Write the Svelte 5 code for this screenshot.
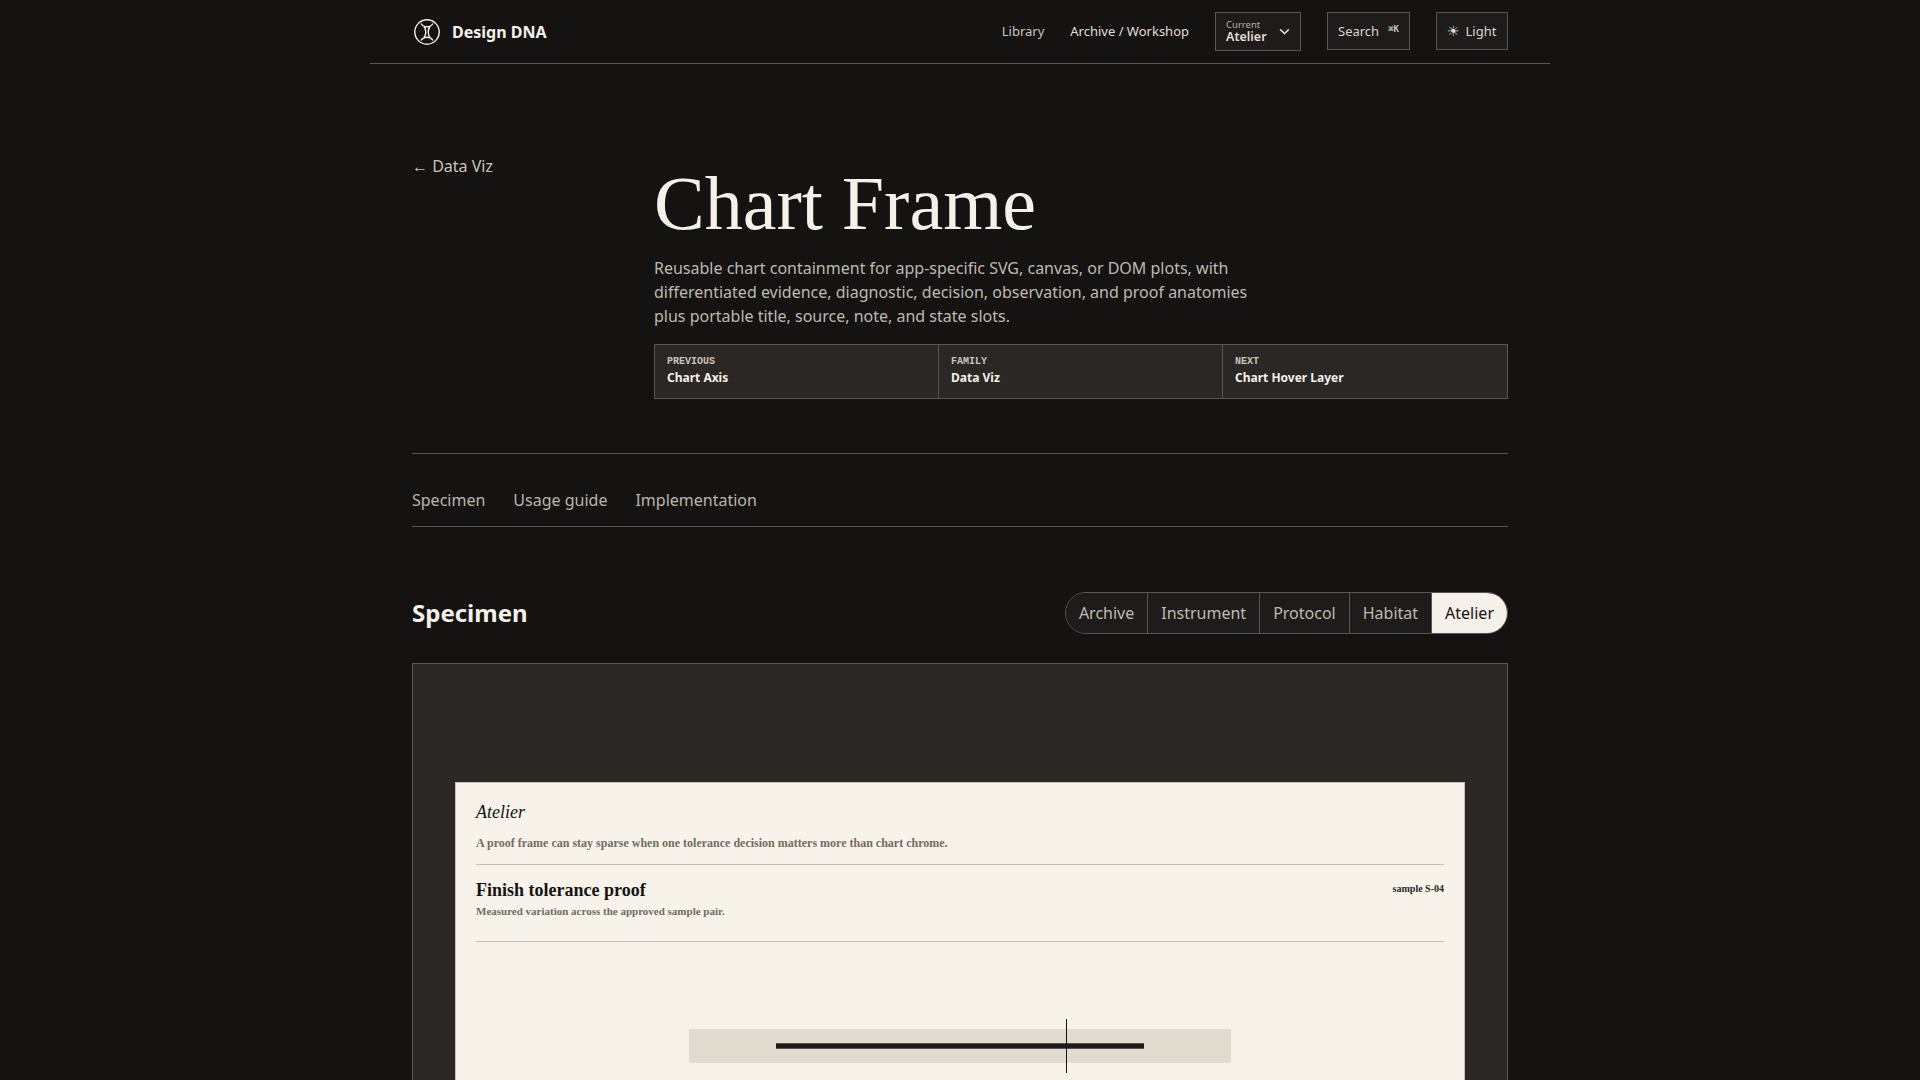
<script lang="ts">
  const navCards = [
    { kicker: "Previous", title: "Chart Axis" },
    { kicker: "Family", title: "Data Viz" },
    { kicker: "Next", title: "Chart Hover Layer" },
  ];
  const sections = ["Specimen", "Usage guide", "Implementation"];
  const themes = ["Archive", "Instrument", "Protocol", "Habitat", "Atelier"];
  let activeTheme = $state("Atelier");
</script>

<div class="shell">
  <header class="top">
    <a class="brand" href="#home">
      <svg class="mark" viewBox="0 0 28 28" width="28" height="28" fill="none" stroke="currentColor" aria-hidden="true">
        <circle cx="14" cy="14" r="12.2" stroke-width="1.4" />
        <path d="M8 5.500C9.500 8 11.500 8.800 14 8.800S18.500 8 20 5.500M8 22.500C9.500 20 11.500 19.200 14 19.200S18.500 20 20 22.500M11 8.500C12.400 10.500 12.800 12 12.800 14S12.400 17.500 11 19.500M17 8.500C15.600 10.500 15.200 12 15.200 14S15.600 17.500 17 19.500" stroke-width="1.4" />
      </svg>
      <span>Design DNA</span>
    </a>
    <nav class="links">
      <a class="muted" href="#library">Library</a>
      <a href="#archive">Archive / Workshop</a>
      <button class="control select">
        <span class="select-text">
          <small>Current</small>
          <b>Atelier</b>
        </span>
        <svg viewBox="0 0 12 12" width="13" height="13" fill="none" stroke="currentColor" stroke-width="1.5" aria-hidden="true"><path d="M2 4 6 8l4-4" /></svg>
      </button>
      <button class="control search">Search <kbd>⌘K</kbd></button>
      <button class="control theme"><span class="sun">☀</span> Light</button>
    </nav>
  </header>

  <main class="page">
    <section class="hero">
      <a class="back" href="#data-viz"><span class="arrow">←</span> Data Viz</a>
      <div class="hero-body">
        <h1>Chart Frame</h1>
        <p class="lede">
          Reusable chart containment for app-specific SVG, canvas, or DOM plots, with differentiated evidence, diagnostic, decision, observation, and proof anatomies plus portable title, source, note, and state slots.
        </p>
        <div class="cards">
          {#each navCards as card}
            <a class="card" href="#card">
              <span class="kicker">{card.kicker}</span>
              <strong>{card.title}</strong>
            </a>
          {/each}
        </div>
      </div>
    </section>

    <nav class="tabs">
      {#each sections as s}<a href="#section">{s}</a>{/each}
    </nav>

    <section class="specimen">
      <div class="specimen-head">
        <h2>Specimen</h2>
        <div class="pills">
          {#each themes as t}
            <button class:active={t === activeTheme} onclick={() => (activeTheme = t)}>{t}</button>
          {/each}
        </div>
      </div>

      <div class="stage">
        <article class="frame">
          <p class="frame-name">Atelier</p>
          <p class="frame-note">A proof frame can stay sparse when one tolerance decision matters more than chart chrome.</p>
          <div class="frame-head">
            <div>
              <h3>Finish tolerance proof</h3>
              <p class="frame-sub">Measured variation across the approved sample pair.</p>
            </div>
            <span class="sample">sample S-04</span>
          </div>
          <div class="plot">
            <div class="track">
              <i class="range"></i>
              <i class="marker"></i>
            </div>
          </div>
        </article>
      </div>
    </section>
  </main>
</div>

<style>
  :global(body) {
    background: #141312;
    overflow: hidden;
    height: 1080px;
  }
  .shell {
    width: 1180px;
    margin: 0 auto;
    color: #f5f0e8;
    font-family: "Noto Sans", sans-serif;
  }
  a {
    color: inherit;
    text-decoration: none;
  }
  .top {
    height: 51px;
    padding: 12px 42px 0;
    display: flex;
    align-items: flex-start;
    justify-content: space-between;
    border-bottom: 1px solid #5a5750;
  }
  .brand {
    display: flex;
    align-items: center;
    gap: 11px;
    height: 39px;
    margin-left: 1px;
    font-size: 16px;
    font-weight: 700;
  }
  .mark {
    display: block;
    flex: none;
  }
  .links {
    display: flex;
    align-items: flex-start;
    font-size: 13px;
    line-height: 38px;
    color: #e4dfd6;
  }
  .links a {
    margin-right: 26px;
  }
  .links .muted {
    color: #c9c4ba;
  }
  .control {
    height: 38px;
    padding: 0 10px;
    margin-left: 26px;
    display: flex;
    align-items: center;
    gap: 8px;
    background: #1e1c1a;
    border: 1px solid #5a5750;
    color: #d9d4ca;
    font: inherit;
    font-size: 13px;
  }
  .links a + .control {
    margin-left: 0;
  }
  .select {
    height: 39px;
    width: 86px;
    justify-content: space-between;
    padding-right: 9px;
  }
  .search {
    width: 83px;
    gap: 9px;
  }
  .theme {
    width: 72px;
    gap: 6px;
  }
  .select-text {
    display: flex;
    flex-direction: column;
    text-align: left;
    line-height: 1;
  }
  .select-text small {
    font-size: 9.5px;
    color: #b5b0a6;
  }
  .select-text b {
    font-size: 12.5px;
    font-weight: 600;
    color: #e4dfd6;
    margin-top: 1px;
  }
  kbd {
    font-family: "DejaVu Sans Mono", monospace;
    font-size: 9px;
    font-weight: 700;
    margin-bottom: 4px;
    color: #c9c4ba;
  }
  .sun {
    font-family: "DejaVu Sans", sans-serif;
    font-size: 14px;
    color: #e4dfd6;
  }
  .page {
    padding: 0 42px;
  }
  .hero {
    display: grid;
    grid-template-columns: 242px 1fr;
    padding-top: 90px;
    padding-bottom: 54px;
    border-bottom: 1px solid #5a5750;
  }
  .back {
    font-size: 16px;
    color: #c9c4ba;
    line-height: 24px;
    height: 24px;
  }
  h1 {
    margin: 7px 0 0;
    font-family: "Liberation Serif", serif;
    font-weight: 400;
    font-size: 76px;
    line-height: 84px;
    color: #f5f0e8;
  }
  .lede {
    margin: 11px 0 0;
    max-width: 600px;
    font-size: 16px;
    line-height: 24px;
    color: #bfbab0;
  }
  .cards {
    margin-top: 16px;
    display: grid;
    grid-template-columns: repeat(3, 1fr);
    background: #2b2724;
    border: 1px solid #5a5750;
  }
  .card {
    padding: 10px 12px 0;
    display: flex;
    flex-direction: column;
    height: 53px;
    box-sizing: border-box;
  }
  .card:not(:last-child) {
    border-right: 1px solid #5a5750;
  }
  .kicker {
    font-family: "Liberation Mono", monospace;
    font-size: 10px;
    font-weight: 700;
    line-height: 14px;
    text-transform: uppercase;
    color: #c9c4ba;
  }
  .card strong {
    font-size: 12px;
    font-weight: 700;
    line-height: 18px;
  }
  .tabs {
    height: 57px;
    padding-bottom: 15px;
    display: flex;
    align-items: flex-end;
    gap: 28px;
    border-bottom: 1px solid #5a5750;
    font-size: 16px;
    color: #bbb6ab;
  }
  .specimen-head {
    margin-top: 65px;
    display: flex;
    align-items: center;
    justify-content: space-between;
  }
  h2 {
    margin: 0 0 1px;
    font-size: 24px;
    font-weight: 700;
    color: #f5f0e8;
  }
  .pills {
    display: flex;
    height: 42px;
    border: 1px solid #5a5750;
    border-radius: 21px;
    overflow: hidden;
    box-sizing: border-box;
  }
  .pills button {
    padding: 0 13px;
    background: #1e1c1a;
    border: 0;
    color: #bfbab0;
    font: inherit;
    font-size: 16px;
  }
  .pills button + button {
    border-left: 1px solid #5a5750;
  }
  .pills button.active {
    background: #f5f0e8;
    color: #141312;
  }
  .stage {
    margin-top: 29px;
    padding: 118px 42px 60px;
    background: #2b2724;
    border: 1px solid #5a5750;
  }
  .frame {
    padding: 18px 20px 20px;
    background: #f7f3ea;
    border: 1px solid #c4bfb2;
    color: #141312;
    font-family: "Liberation Serif", serif;
  }
  .frame-name {
    margin: 0;
    font-size: 18px;
    font-style: italic;
    line-height: 22px;
  }
  .frame-note {
    margin: 12px 0 0;
    padding-bottom: 13px;
    font-size: 12px;
    font-weight: 700;
    line-height: 16px;
    color: #736b60;
    border-bottom: 1px solid #c4bfb2;
  }
  .frame-head {
    display: flex;
    justify-content: space-between;
    align-items: flex-start;
    padding: 14px 0 23px;
    border-bottom: 1px solid #c4bfb2;
  }
  h3 {
    margin: 0;
    font-size: 18px;
    font-weight: 700;
    line-height: 22px;
  }
  .frame-sub {
    margin: 3px 0 0;
    font-size: 11px;
    font-weight: 700;
    line-height: 14px;
    color: #736b60;
  }
  .sample {
    font-size: 10px;
    font-weight: 700;
    line-height: 20px;
    color: #2c2825;
  }
  .plot {
    padding: 87px 0 40px;
  }
  .track {
    position: relative;
    width: 542px;
    height: 34px;
    margin: 0 auto;
    background: #e1dcd0;
  }
  .range {
    position: absolute;
    left: 87px;
    width: 368px;
    top: 14px;
    height: 4px;
    border-block: 1px solid #57534a;
    background: #1f1c17;
  }
  .marker {
    position: absolute;
    left: 377px;
    top: -10px;
    width: 1px;
    height: 54px;
    background: #141312;
  }
</style>
